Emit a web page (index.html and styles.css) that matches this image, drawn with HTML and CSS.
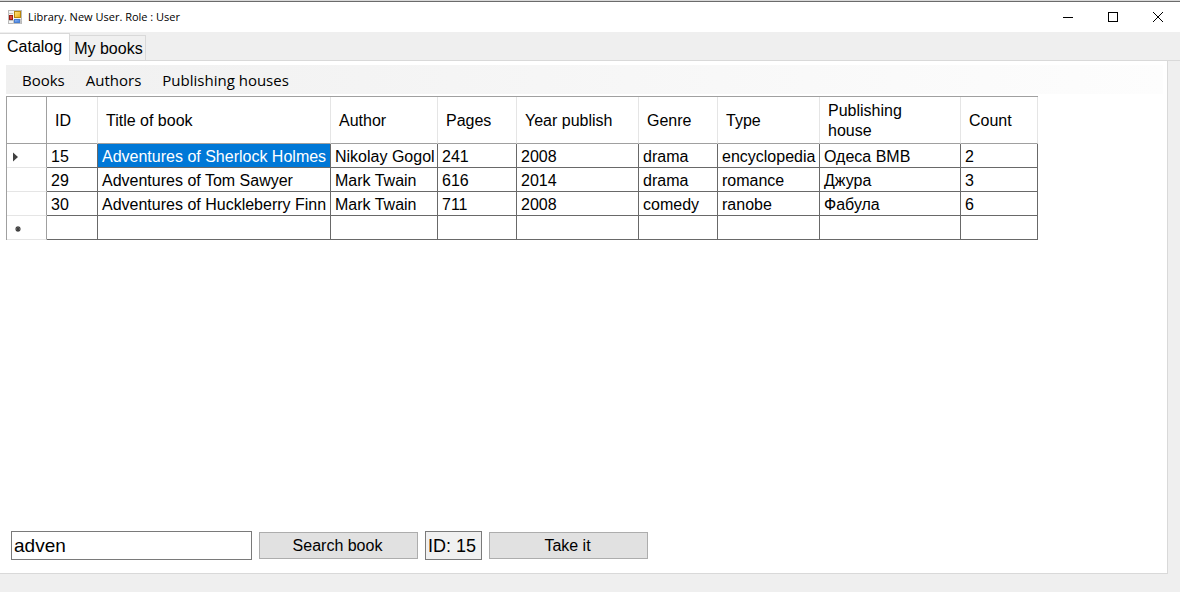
FILE: index.html
```html
<!DOCTYPE html>
<html lang="en">
<head>
<meta charset="utf-8">
<meta name="viewport" content="width=device-width, initial-scale=1">
<title>Library. New User. Role : User</title>
<link rel="stylesheet" href="styles.css">
</head>
<body>
<div class="window">
  <header class="titlebar">
    <svg class="app-icon" viewBox="0 0 14 14" width="14" height="14" aria-hidden="true">
      <defs>
        <linearGradient id="gold" x1="0" y1="0" x2="1" y2="1"><stop offset="0" stop-color="#ffe88a"/><stop offset="1" stop-color="#e8a90c"/></linearGradient>
        <linearGradient id="blue" x1="0" y1="0" x2="1" y2="1"><stop offset="0" stop-color="#8db8f5"/><stop offset="1" stop-color="#3c78dc"/></linearGradient>
      </defs>
      <rect x="0.5" y="0.5" width="13" height="13" fill="#f4f4f4" stroke="#b9b9b9"/>
      <path d="M0 3.500h5M0 10.500h14M5.500 10v4M12.500 9v5" stroke="#c4c4c4" fill="none"/>
      <rect x="6.500" y="1.500" width="6" height="6" fill="url(#gold)" stroke="#b8860b"/>
      <rect x="1.500" y="5.500" width="3" height="4" fill="#d8473a" stroke="#9c1c14"/>
      <rect x="6.500" y="9.500" width="5" height="3" fill="url(#blue)" stroke="#4a7fd0"/>
    </svg>
    <h1 class="title">Library. New User. Role : User</h1>
    <div class="window-controls">
      <button class="control" type="button" aria-label="Minimize"><svg width="10" height="10" viewBox="0 0 10 10"><path d="M0 5.500h10" stroke="#000" fill="none"/></svg></button>
      <button class="control" type="button" aria-label="Maximize"><svg width="10" height="10" viewBox="0 0 10 10"><rect x=".5" y=".5" width="9" height="9" stroke="#000" fill="none"/></svg></button>
      <button class="control" type="button" aria-label="Close"><svg width="10" height="10" viewBox="0 0 10 10"><path d="M0 0l10 10M10 0L0 10" stroke="#000" fill="none"/></svg></button>
    </div>
  </header>
  <div class="tabs" role="tablist">
    <button class="tab tab-active" id="tab-catalog" type="button" role="tab" aria-selected="true" aria-controls="catalog">Catalog</button>
    <button class="tab" type="button" role="tab" aria-selected="false">My books</button>
    <div class="tabs-rest"></div>
  </div>
  <main class="page" id="catalog" role="tabpanel" aria-labelledby="tab-catalog">
    <nav class="menu">
      <button class="menu-item" type="button">Books</button>
      <button class="menu-item" type="button">Authors</button>
      <button class="menu-item" type="button">Publishing houses</button>
    </nav>
    <div class="grid-area">
      <table class="grid">
        <colgroup>
          <col class="col-mark"><col class="col-id"><col class="col-title"><col class="col-author"><col class="col-pages"><col class="col-year"><col class="col-genre"><col class="col-type"><col class="col-house"><col class="col-count">
        </colgroup>
        <thead>
          <tr><td class="mark"></td><th scope="col">ID</th><th scope="col">Title of book</th><th scope="col">Author</th><th scope="col">Pages</th><th scope="col">Year publish</th><th scope="col">Genre</th><th scope="col">Type</th><th scope="col">Publishing house</th><th scope="col">Count</th></tr>
        </thead>
        <tbody>
          <tr><td class="mark"><svg class="glyph" width="14" height="10" viewBox="0 0 14 10" aria-hidden="true"><path d="M1 0.500v9L6 5z" fill="#404040"/></svg></td><td>15</td><td class="selected">Adventures of Sherlock Holmes</td><td>Nikolay Gogol</td><td>241</td><td>2008</td><td>drama</td><td>encyclopedia</td><td>Одеса ВМВ</td><td>2</td></tr>
          <tr><td class="mark"></td><td>29</td><td>Adventures of Tom Sawyer</td><td>Mark Twain</td><td>616</td><td>2014</td><td>drama</td><td>romance</td><td>Джура</td><td>3</td></tr>
          <tr><td class="mark"></td><td>30</td><td>Adventures of Huckleberry Finn</td><td>Mark Twain</td><td>711</td><td>2008</td><td>comedy</td><td>ranobe</td><td>Фабула</td><td>6</td></tr>
          <tr><td class="mark"><svg class="glyph" width="14" height="10" viewBox="0 0 14 10" aria-hidden="true"><path d="M6 2v6M3 5h6M4 3l4 4M8 3l-4 4" stroke="#404040" stroke-width="1.200" fill="none"/></svg></td><td></td><td></td><td></td><td></td><td></td><td></td><td></td><td></td><td></td></tr>
        </tbody>
      </table>
    </div>
    <form class="actions">
      <input class="field search" type="text" value="adven" aria-label="Book title">
      <button class="button" type="button">Search book</button>
      <input class="field book-id" type="text" value="ID: 15" aria-label="Selected book" readonly>
      <button class="button" type="button">Take it</button>
    </form>
  </main>
</div>
</body>
</html>
```
FILE: styles.css
```css
* {
  box-sizing: border-box;
}

body {
  margin: 0;
  background: #efefef;
  color: #000;
  font: 16px/20px "Liberation Sans", Arial, sans-serif;
}

button,
input {
  margin: 0;
  border-radius: 0;
  color: inherit;
  font: inherit;
}

.window {
  display: flex;
  flex-direction: column;
  min-height: 100vh;
  padding-bottom: 18px;
  border-top: 1px solid #d9d9d9;
}

.titlebar {
  display: flex;
  align-items: center;
  height: 31px;
  padding-left: 8px;
  border-top: 1px solid #6b6b6b;
  background: #fff;
}

.app-icon {
  flex: none;
}

.title {
  flex: 1;
  margin: 0 0 0 6px;
  font: 11px/16px "Open Sans", "Noto Sans", sans-serif;
}

.window-controls {
  display: flex;
}

.control {
  display: grid;
  place-items: center;
  width: 45px;
  height: 28px;
  padding: 0;
  border: 0;
  background: none;
}

.tabs {
  display: flex;
  align-items: flex-end;
  height: 29px;
}

.tab {
  height: 26px;
  padding: 2px 2px 0 4px;
  border: 1px solid #d9d9d9;
  border-left: 0;
  background: #f0f0f0;
}

.tab-active {
  height: 28px;
  padding: 0 7px 1px;
  border-bottom: 0;
  background: #fff;
}

.tabs-rest {
  flex: 1;
  border-bottom: 1px solid #d9d9d9;
}

.page {
  display: flex;
  flex: 1;
  flex-direction: column;
  margin-right: 12px;
  padding: 4px 4px 13px 6px;
  border: solid #d9d9d9;
  border-width: 0 1px 1px 0;
  background: #fff;
}

.menu {
  display: flex;
  align-items: center;
  gap: 5px;
  height: 29px;
  padding-left: 8px;
  background: linear-gradient(90deg, #f0f0f0, #fdfdfd);
}

.menu-item {
  padding: 0 8px;
  border: 0;
  background: none;
  font: 15px/20px "Open Sans", "Noto Sans", sans-serif;
}

.grid-area {
  flex: 1;
  padding-top: 2px;
}

.grid {
  table-layout: fixed;
  width: 1032px;
  border: solid #a0a0a0;
  border-width: 1px 0 0 1px;
  border-spacing: 0;
}

.col-mark { width: 40px; }
.col-id { width: 51px; }
.col-title { width: 233px; }
.col-author { width: 107px; }
.col-pages { width: 79px; }
.col-year { width: 122px; }
.col-genre { width: 79px; }
.col-type { width: 102px; }
.col-house { width: 141px; }
.col-count { width: 77px; }

.grid th,
.grid td {
  border: solid #696969;
  border-width: 0 1px 1px 0;
  text-align: left;
  white-space: nowrap;
}

.grid td {
  height: 24px;
  padding: 3px 2px 0 4px;
}

.grid th {
  height: 47px;
  padding: 4px 16px 2px 8px;
  border-color: #e5e5e5 #e5e5e5 #a0a0a0;
  font-weight: 400;
  white-space: normal;
}

.grid .mark {
  padding: 2px 5px 0;
  border-color: #e5e5e5 #a0a0a0 #e5e5e5;
}

.grid thead .mark {
  border-bottom-color: #a0a0a0;
}

.grid .selected {
  background: #0078d7;
  color: #fff;
}

.glyph {
  display: block;
}

.actions {
  display: flex;
  align-items: center;
  gap: 7px;
  padding-left: 5px;
}

.field {
  height: 29px;
  padding: 0 2px;
  border: 1px solid #7a7a7a;
  background: #fff;
  font-size: 19px;
}

.search {
  width: 241px;
}

.book-id {
  width: 57px;
  padding: 1px 1px 0 2px;
  background: #f0f0f0;
  font-size: 18px;
}

.button {
  width: 159px;
  height: 27px;
  padding: 0 2px 0 0;
  border: 1px solid #adadad;
  background: #e1e1e1;
}
```
